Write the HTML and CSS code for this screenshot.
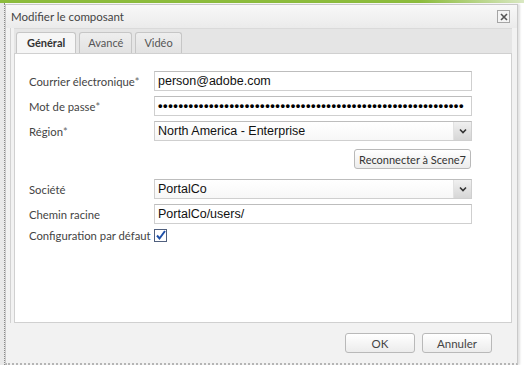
FILE: index.html
```html
<!DOCTYPE html>
<html lang="fr">
<head>
    <meta charset="UTF-8">
    <meta name="viewport" content="width=device-width, initial-scale=1.0">
    <title>Modifier le composant</title>
    <link rel="stylesheet" href="styles.css">
</head>
<body>
    <div class="topbar"></div>
    <div class="screen">
        <div class="side"></div>
        <div class="dialog">
            <div class="dialog-header">
                <span class="title">Modifier le composant</span>
                <span class="close">
                    <svg width="8" height="8" viewBox="0 0 8 8"><path d="M1 1L7 7M7 1L1 7" stroke="#555" stroke-width="1.6"/></svg>
                </span>
            </div>
            <div class="dialog-body">
                <div class="tabs">
                    <div class="tab active">Général</div>
                    <div class="tab">Avancé</div>
                    <div class="tab">Vidéo</div>
                </div>
                <div class="panel">
                    <form class="form">
                        <div class="row">
                            <label>Courrier électronique<span class="req">*</span></label>
                            <input type="text" class="field" value="person@adobe.com">
                        </div>
                        <div class="row">
                            <label>Mot de passe<span class="req">*</span></label>
                            <div class="field dots">••••••••••••••••••••••••••••••••••••••••••••••••••••••••••••</div>
                        </div>
                        <div class="row">
                            <label>Région<span class="req">*</span></label>
                            <div class="field select">
                                <span>North America - Enterprise</span>
                                <span class="arrow"><svg width="8" height="6" viewBox="0 0 8 6"><path d="M1 1.5L4 4.5L7 1.5" fill="none" stroke="#333" stroke-width="1.6"/></svg></span>
                            </div>
                        </div>
                        <div class="row-btn">
                            <button type="button" class="btn small">Reconnecter à Scene7</button>
                        </div>
                        <div class="row">
                            <label>Société</label>
                            <div class="field select">
                                <span>PortalCo</span>
                                <span class="arrow"><svg width="8" height="6" viewBox="0 0 8 6"><path d="M1 1.5L4 4.5L7 1.5" fill="none" stroke="#333" stroke-width="1.6"/></svg></span>
                            </div>
                        </div>
                        <div class="row">
                            <label>Chemin racine</label>
                            <input type="text" class="field" value="PortalCo/users/">
                        </div>
                        <div class="row check-row">
                            <label class="inline">Configuration par défaut</label>
                            <span class="checkbox">
                                <svg width="11" height="11" viewBox="0 0 11 11"><path d="M2 5.5L4.5 8.5L10 1" fill="none" stroke="#1d4fa8" stroke-width="2"/></svg>
                            </span>
                        </div>
                    </form>
                </div>
            </div>
            <div class="footer">
                <button type="button" class="btn">OK</button>
                <button type="button" class="btn">Annuler</button>
            </div>
        </div>
    </div>
</body>
</html>
```
FILE: styles.css
```css
body {
    margin: 0;
    padding: 0;
    width: 524px;
    height: 365px;
    overflow: hidden;
    background: #ffffff;
    font-family: Lato, sans-serif;
    color: #444;
}

.topbar {
    height: 3px;
    background: linear-gradient(to right, #8cbc3c 80%, #d9e8c2);
}

.screen {
    display: flex;
    height: 362px;
}
.side {
    width: 4px;
    background: #e9e9e9;
    border-right: 1px dotted #8a8a8a;
}

.dialog {
    width: 511px;
    margin: 1px 0 0 0;
    border: 1px solid #c9c9c9;
    border-bottom: 2px dotted #b5b5b5;
    background: #f2f2f2;
    display: flex;
    flex-direction: column;
    box-shadow: 2px 0 2px rgba(0, 0, 0, 0.12);
}

.dialog-header {
    height: 23px;
    display: flex;
    justify-content: space-between;
    align-items: center;
    padding: 0 7px 0 5px;
    background: linear-gradient(#f8f8f8, #ebebeb);
}
.title {
    font-size: 11.5px;
    color: #444;
}
.close {
    width: 11px;
    height: 11px;
    border: 1px solid #a5a5a5;
    background: #f4f4f4;
    display: flex;
    justify-content: center;
    align-items: center;
}

.dialog-body {
    margin: 0 5px 0 4px;
    border-left: 1px solid #d2d2d2;
    padding-left: 3px;
}
.tabs {
    display: flex;
    gap: 3px;
    height: 24px;
    padding-left: 2px;
    align-items: flex-end;
    background: #e5e5e5;
    border-top: 1px solid #dadada;
}
.tab {
    height: 20px;
    padding: 0 8px;
    font-size: 11px;
    line-height: 20px;
    color: #555;
    border: 1px solid #c6c6c6;
    border-bottom: none;
    border-radius: 3px 3px 0 0;
    background: linear-gradient(#eeeeee, #e2e2e2);
}
.tab.active {
    padding: 0 10px;
    font-weight: bold;
    color: #333;
    background: #f6f6f6;
}

.panel {
    background: #ffffff;
    border: 1px solid #d0d0d0;
    height: 270px;
    box-sizing: border-box;
    padding: 17px 0 0 14px;
}

.form {
    display: flex;
    flex-direction: column;
    gap: 5px;
}
.row {
    display: flex;
    align-items: center;
}
.row label {
    width: 125px;
    font-size: 11.3px;
    color: #444;
}
.row label.inline {
    width: auto;
    margin-right: 3px;
}
.req {
    font-size: 11px;
    color: #666;
}

.field {
    width: 318px;
    height: 20px;
    box-sizing: border-box;
    border: 1px solid #cfcfcf;
    border-top-color: #bdbdbd;
    background: #ffffff;
    padding: 0 3px;
    font-family: "Liberation Sans", sans-serif;
    font-size: 12.5px;
    color: #111;
    outline: 0;
    margin: 0;
}
.dots {
    white-space: nowrap;
    overflow: hidden;
    line-height: 18px;
    font-size: 13px;
    letter-spacing: 0.55px;
    font-weight: bold;
    color: #000;
}
.select {
    display: flex;
    align-items: center;
    justify-content: space-between;
    padding-right: 0;
    background: linear-gradient(#ffffff, #f7f7f7);
}
.arrow {
    width: 17px;
    height: 18px;
    display: flex;
    justify-content: center;
    align-items: center;
    background: linear-gradient(#f0f0f0, #d6d6d6);
    border-left: 1px solid #e2e2e2;
}

.row-btn {
    display: flex;
    justify-content: flex-end;
    width: 442px;
    margin: 3px 0 5px 0;
}

.btn {
    width: 70px;
    height: 20px;
    border: 1px solid #b9b9b9;
    border-radius: 3px;
    background: linear-gradient(#ffffff, #ececec);
    font-family: Lato, sans-serif;
    font-size: 11.5px;
    color: #444;
    padding: 0;
    cursor: pointer;
}
.btn.small {
    width: auto;
    padding: 0 4px;
    font-size: 11px;
    color: #333;
}

.check-row {
    margin-top: 0;
}
.checkbox {
    width: 11px;
    height: 11px;
    border: 1px solid #50607e;
    background: #ffffff;
    display: flex;
}

.footer {
    flex: 1;
    display: flex;
    justify-content: flex-end;
    align-items: flex-start;
    gap: 7px;
    padding: 10px 25px 0 0;
}
```
